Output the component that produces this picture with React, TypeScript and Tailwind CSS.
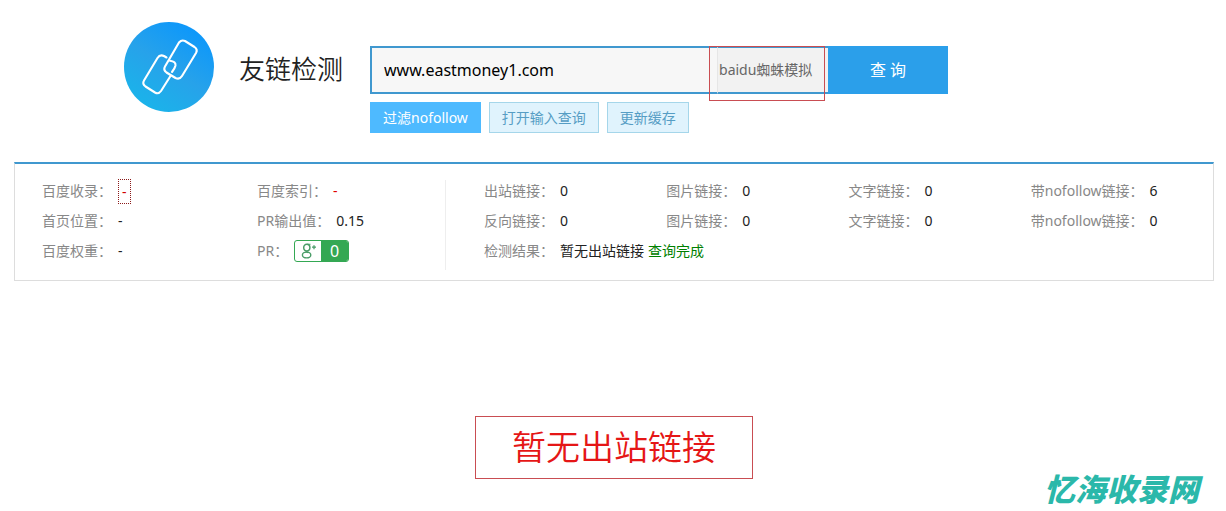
import type { ReactNode } from "react";

type StatProps = { label: string; children: ReactNode };

function Stat({ label, children }: StatProps) {
  return (
    <div className="flex h-[30px] items-center gap-[6px] whitespace-nowrap">
      <dt className="text-[#888]">{label}：</dt>
      <dd className="flex items-center gap-1 text-[#222]">{children}</dd>
    </div>
  );
}

function LinkLogo() {
  return (
    <svg viewBox="0 0 90 90" className="size-[90px] shrink-0" fill="none" aria-hidden="true">
      <defs>
        <linearGradient id="disc" x1="20" y1="86" x2="72" y2="6" gradientUnits="userSpaceOnUse">
          <stop stopColor="#1ab4ea" />
          <stop offset="0.5" stopColor="#27a2ea" />
          <stop offset="1" stopColor="#0c97fb" />
        </linearGradient>
      </defs>
      <circle cx="45" cy="45" r="45" fill="url(#disc)" />
      <g stroke="#fff" strokeWidth="2.1" strokeLinecap="round" strokeLinejoin="round">
        <path d="M55 20.500 Q57.500 17.500 61 19 L70.500 25 Q74 27.500 72 31 L58 54 Q55.500 58 51.500 56 L42.500 50.500 Q39 48 41 44.500 Z" />
        <path d="M42.500 35.500 L40 34 Q36 32 33.500 36 L20 58.500 Q18 62 21.500 64.500 L31 70.500 Q34.500 72.500 37 69 L46.500 54" />
        <path d="M46 38.800 Q52 39.500 51.500 43.500 Q51 46 48 50" />
      </g>
    </svg>
  );
}

function PrBadge() {
  return (
    <span className="flex h-[22px] w-[55px] overflow-hidden rounded-[3px] border border-[#34a853] bg-white">
      <svg viewBox="0 0 26 20" className="h-5 w-[26px]" fill="none" stroke="#4a9d68" aria-label="g+">
        <ellipse cx="11.800" cy="6.600" rx="3.100" ry="3.400" strokeWidth="1.500" />
        <path d="M12 3.200H15.500" strokeWidth="1.100" />
        <path d="M11.500 10Q11 10.800 13 11.600" strokeWidth="1.500" />
        <ellipse cx="11.600" cy="14" rx="4.200" ry="2.900" strokeWidth="1.400" />
        <path d="M19 4.200V8.200M17 6.200H21" strokeWidth="1.300" />
      </svg>
      <span className="flex flex-1 items-center justify-center bg-[#34a853] text-base leading-5 text-white">0</span>
    </span>
  );
}

export default function App() {
  return (
    <main className="bg-white pt-[22px] pr-3 pb-1 pl-[14px] font-['Noto_Sans','Noto_Sans_CJK_SC',sans-serif] text-sm">
      <header className="flex items-start pl-[110px]">
        <LinkLogo />
        <h1 className="ml-[25px] pt-[27px] text-[26px] leading-[40px] font-[350] whitespace-nowrap text-[#222]">友链检测</h1>
        <form className="ml-[27px] w-full max-w-[578px] pt-6" onSubmit={(e) => e.preventDefault()}>
          <div className="relative flex h-12">
            <input
              type="text"
              aria-label="网址"
              defaultValue="www.eastmoney1.com"
              className="min-w-0 flex-1 border-2 border-r-0 border-[#4098cf] bg-[#f7f7f7] px-3 text-base text-black outline-none"
            />
            <select
              aria-label="模拟方式"
              className="w-[111px] appearance-none border-y-2 border-l border-y-[#4098cf] border-l-[#e6e6e6] bg-[#f2f2f2] pl-px text-sm text-[#666] outline-none"
            >
              <option>baidu蜘蛛模拟</option>
            </select>
            <button type="submit" className="w-[120px] bg-[#2b9fea] text-base text-white">
              查 询
            </button>
            <span className="pointer-events-none absolute top-0 right-[123px] h-[55px] w-[116px] border border-[#c94d52]" />
          </div>
          <div className="mt-2 flex gap-2 leading-[29px]">
            <button type="button" className="border border-[#4ebaff] bg-[#4ebaff] px-3 text-white">
              过滤nofollow
            </button>
            <button type="button" className="border border-[#a5d6ea] bg-[#e0f3fd] px-3 text-[#569dc4]">
              打开输入查询
            </button>
            <button type="button" className="border border-[#a5d6ea] bg-[#e0f3fd] px-3 text-[#569dc4]">
              更新缓存
            </button>
          </div>
        </form>
      </header>

      <section className="mt-[29px] flex border border-t-2 border-[#ddd] border-t-[#4098cf] pt-3 pb-[14px] pl-[27px]">
        <dl className="grid w-[403px] grid-cols-[215px_1fr]">
          <Stat label="百度收录">
            <a href="#baidu" className="border border-dotted border-[#8b1a1a] px-[3px] leading-[23px] text-[#d00000]">
              -
            </a>
          </Stat>
          <Stat label="百度索引">
            <a href="#index" className="text-[#e00000]">-</a>
          </Stat>
          <Stat label="首页位置">-</Stat>
          <Stat label="PR输出值">0.15</Stat>
          <Stat label="百度权重">-</Stat>
          <Stat label="PR">
            <PrBadge />
          </Stat>
        </dl>
        <dl className="mt-1 -mb-1 flex-1 border-l border-[#eee] pl-[38px]">
          <div className="-mt-1 grid grid-cols-4">
            <Stat label="出站链接">0</Stat>
            <Stat label="图片链接">0</Stat>
            <Stat label="文字链接">0</Stat>
            <Stat label="带nofollow链接">6</Stat>
            <Stat label="反向链接">0</Stat>
            <Stat label="图片链接">0</Stat>
            <Stat label="文字链接">0</Stat>
            <Stat label="带nofollow链接">0</Stat>
            <Stat label="检测结果">
              <span>暂无出站链接</span>
              <span className="text-[#008000]">查询完成</span>
            </Stat>
          </div>
        </dl>
      </section>

      <p className="mx-auto mt-[135px] w-fit border border-[#c94d52] px-9 text-[34px] leading-[61px] font-[350] text-[#e51616]">
        暂无出站链接
      </p>
      <footer className="-mt-2 pr-[15px] text-right text-[31px] leading-9 font-black text-[#2bb8aa] italic">
        忆海收录网
      </footer>
    </main>
  );
}
